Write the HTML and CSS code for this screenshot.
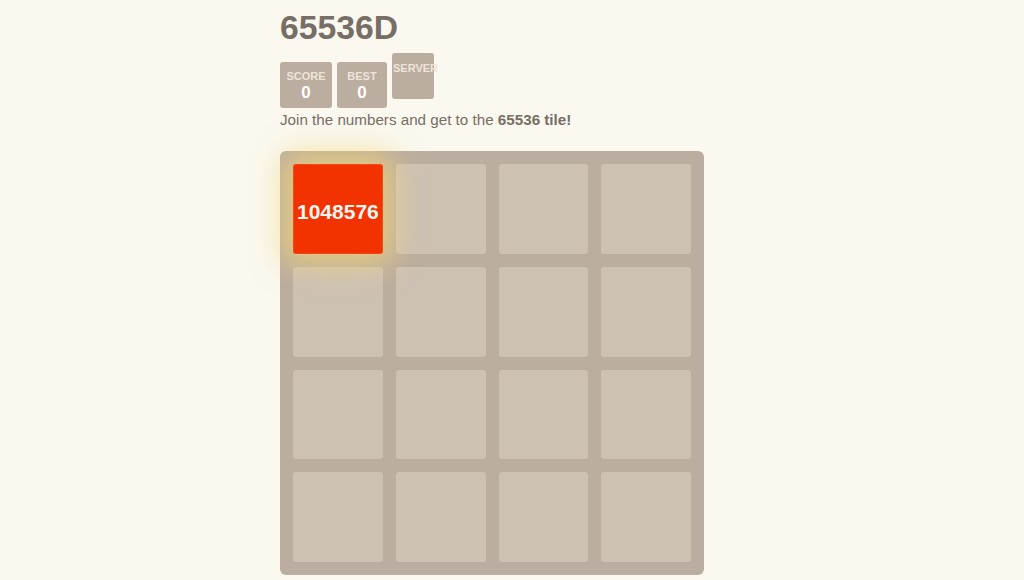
FILE: index.html
```html
<!DOCTYPE html>
<html>
<head>
<meta charset="utf-8">
<link rel="stylesheet" href="styles.css">
</head>
<body>
<div class="container">
  <h1 class="title">65536D</h1>
  <div class="scores">
    <div class="score-box low"><div class="label">SCORE</div><div class="value">0</div></div>
    <div class="score-box low"><div class="label">BEST</div><div class="value">0</div></div>
    <div class="score-box server"><div class="label">SERVER</div></div>
  </div>
  <p class="intro">Join the numbers and get to the <strong>65536 tile!</strong></p>
  <div class="board">
    <div class="cell tile-big">1048576</div>
    <div class="cell"></div><div class="cell"></div><div class="cell"></div>
    <div class="cell"></div><div class="cell"></div><div class="cell"></div><div class="cell"></div>
    <div class="cell"></div><div class="cell"></div><div class="cell"></div><div class="cell"></div>
    <div class="cell"></div><div class="cell"></div><div class="cell"></div><div class="cell"></div>
  </div>
</div>
</body>
</html>
```
FILE: styles.css
```css
html, body {
  margin: 0;
  padding: 0;
  background: #faf8ef;
  font-family: "Liberation Sans", Arial, sans-serif;
  color: #776e65;
}
.container {
  width: 424px;
  margin-left: 280px;
  padding-top: 8px;
}
.title {
  margin: 0;
  font-size: 33.7px;
  font-weight: bold;
  line-height: 38px;
  height: 45px;
}
.scores {
  display: flex;
  align-items: flex-start;
  gap: 5px;
}
.score-box {
  background: #bbada0;
  border-radius: 3px;
  height: 46px;
  text-align: center;
  color: #fff;
  box-sizing: border-box;
}
.score-box.low {
  margin-top: 9px;
  padding-top: 8px;
  width: 52px;
}
.score-box.low + .score-box.low { width: 50px; }
.score-box.server {
  width: 42px;
  padding-top: 9px;
  white-space: nowrap;
}
.label {
  font-size: 11px;
  line-height: 12px;
  font-weight: bold;
  color: #eee4da;
}
.server .label {
  text-align: left;
  padding-left: 1px;
}
.value {
  font-size: 17px;
  font-weight: bold;
  line-height: 20px;
  margin-top: 1px;
  color: #fff;
}
.intro {
  margin: 2px 0 0 0;
  font-size: 15.2px;
  line-height: 20px;
}
.board {
  margin-top: 21px;
  width: 424px;
  height: 424px;
  box-sizing: border-box;
  padding: 13px;
  background: #bbada0;
  border-radius: 6px;
  display: grid;
  grid-template-columns: repeat(4, 1fr);
  grid-template-rows: repeat(4, 1fr);
  gap: 13px;
}
.cell {
  background: #cdc1b4;
  border-radius: 3px;
}
.tile-big {
  background: #f23300;
  color: #f9f6f2;
  font-weight: bold;
  font-size: 21px;
  padding-top: 6px;
  box-sizing: border-box;
  display: flex;
  align-items: center;
  justify-content: center;
  box-shadow: 0 0 30px 10px rgba(243, 215, 116, 0.75), inset 0 0 0 1px rgba(255, 255, 255, 0.1);
  position: relative;
  z-index: 1;
}
```
